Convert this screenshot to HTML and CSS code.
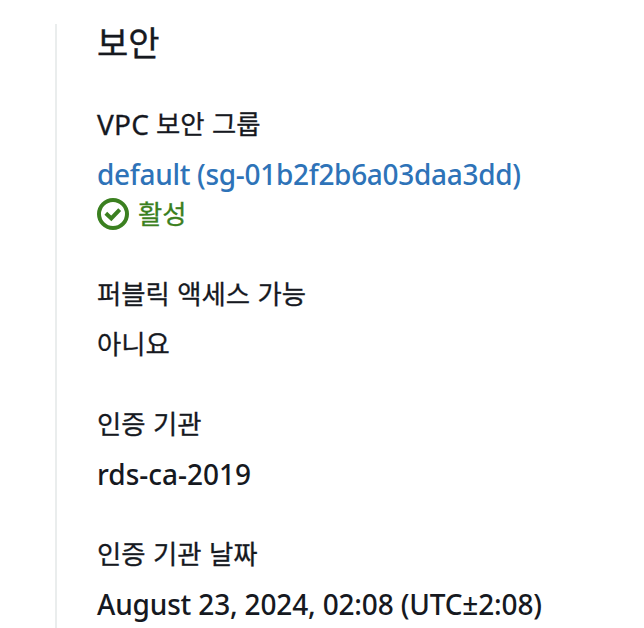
FILE: index.html
```html
<!DOCTYPE html>
<html lang="ko">
<head>
  <meta charset="UTF-8">
  <meta name="viewport" content="width=device-width, initial-scale=1.0">
  <title>보안</title>
  <link rel="stylesheet" href="styles.css">
</head>
<body>
  <section class="security">
    <h2>보안</h2>
    <dl class="group">
      <dt><span class="vpc">VPC</span> <span class="ko">보안 그룹</span></dt>
      <dd><a class="latin sg-link" href="#">default (sg-01b2f2b6a03daa3dd)</a></dd>
      <dd class="status">
        <svg class="status-icon" viewBox="0 0 32 32" width="32" height="32" fill="none" stroke="currentColor" stroke-width="4">
          <circle cx="16" cy="16" r="14"/>
          <path d="M8.8 15.2 14.3 20.4 22.7 11.6"/>
        </svg>
        <span class="ko">활성</span>
      </dd>
    </dl>
    <dl class="group">
      <dt><span class="ko">퍼블릭 액세스 가능</span></dt>
      <dd><span class="ko">아니요</span></dd>
    </dl>
    <dl class="group">
      <dt><span class="ko">인증 기관</span></dt>
      <dd><span class="latin">rds-ca-2019</span></dd>
    </dl>
    <dl class="group">
      <dt><span class="ko">인증 기관 날짜</span></dt>
      <dd><span class="latin date">August 23, 2024, 02:08 (UTC±2:08)</span></dd>
    </dl>
  </section>
</body>
</html>
```
FILE: styles.css
```css
body {
  margin: 0;
  background-color: #fff;
  color: #16191f;
  font-family: "Noto Sans", "Noto Sans CJK KR", sans-serif;
  font-size: 28px;
  line-height: 40px;
}

.security {
  box-sizing: border-box;
  height: 604px;
  margin: 24px 0 0 55px;
  padding-left: 40px;
  border-left: 2px solid #eaeded;
}

h2 {
  height: 40px;
  margin: 0 0 40px;
  font-family: "Noto Sans CJK KR", sans-serif;
  font-size: 34px;
  font-weight: 400;
  line-height: 36px;
  -webkit-text-stroke: 0.4px;
}

.group {
  margin: 0 0 40px;
}

.group:last-child {
  margin-bottom: 0;
}

.group dt {
  margin-bottom: 10px;
}

.group dt,
.group dd {
  display: flex;
  align-items: center;
  gap: 7px;
  height: 40px;
  white-space: nowrap;
}

.group dd {
  margin-left: 0;
}

.latin {
  font-weight: 500;
}

.vpc {
  letter-spacing: 0.2px;
  -webkit-text-stroke: 0.3px;
}

.ko {
  padding-bottom: 3px;
  font-family: "Noto Sans CJK KR", sans-serif;
  font-size: 26.4px;
  -webkit-text-stroke: 0.3px;
}

.sg-link {
  color: #2e73b8;
  letter-spacing: -0.31px;
  text-decoration: none;
}

.date {
  letter-spacing: -0.16px;
}

.group .status {
  gap: 9px;
  color: #3b8020;
}
```
